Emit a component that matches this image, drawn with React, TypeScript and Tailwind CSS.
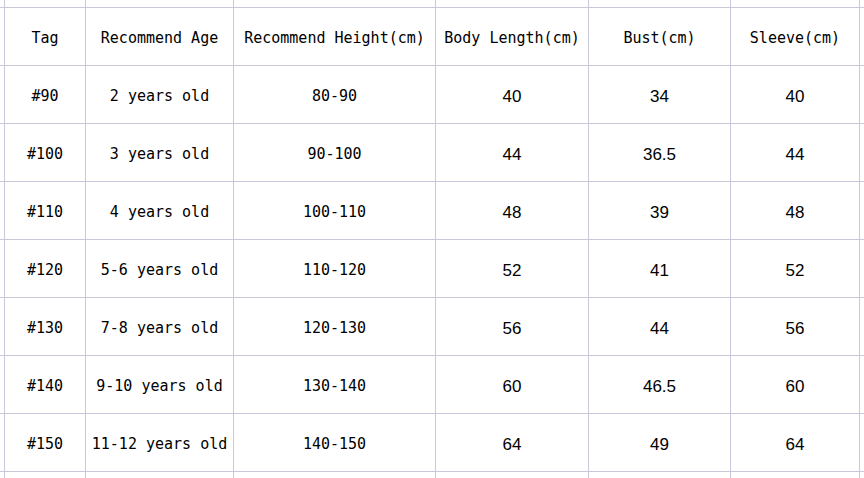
const headers = ['Tag', 'Recommend Age', 'Recommend Height(cm)', 'Body Length(cm)', 'Bust(cm)', 'Sleeve(cm)'];

const rows = [
  ['#90', '2 years old', '80-90', '40', '34', '40'],
  ['#100', '3 years old', '90-100', '44', '36.5', '44'],
  ['#110', '4 years old', '100-110', '48', '39', '48'],
  ['#120', '5-6 years old', '110-120', '52', '41', '52'],
  ['#130', '7-8 years old', '120-130', '56', '44', '56'],
  ['#140', '9-10 years old', '130-140', '60', '46.5', '60'],
  ['#150', '11-12 years old', '140-150', '64', '49', '64'],
];

export default function App() {
  return (
    <div
      className="grid h-[478px] w-[864px] grid-cols-[4px_80px_147px_201px_152px_141px_128px_1fr] grid-rows-[7px_repeat(8,57px)_1fr] gap-px overflow-hidden bg-[#c8c8da] text-[15px] text-black"
      style={{ fontFamily: '"DejaVu Sans Mono", "Liberation Mono", monospace' }}
    >
      {/* top sliver row */}
      {Array.from({ length: 8 }).map((_, j) => (
        <div key={`t${j}`} className="bg-white" />
      ))}

      {/* header */}
      <div className="bg-white" />
      {headers.map((h) => (
        <div key={h} className="flex items-center justify-center whitespace-pre bg-white pt-1">
          {h}
        </div>
      ))}
      <div className="bg-white" />

      {/* body */}
      {rows.map((r) => [
        <div key={`${r[0]}-l`} className="bg-white" />,
        ...r.map((cell, j) => (
          <div
            key={`${r[0]}-${j}`}
            className={`flex items-center justify-center whitespace-pre bg-white pt-1 ${
              j >= 3 ? 'font-["Liberation_Sans",Arial,sans-serif] text-[17px]' : ''
            }`}
          >
            {cell}
          </div>
        )),
        <div key={`${r[0]}-r`} className="bg-white" />,
      ])}

      {/* bottom sliver row */}
      {Array.from({ length: 8 }).map((_, j) => (
        <div key={`b${j}`} className="bg-white" />
      ))}
    </div>
  );
}
